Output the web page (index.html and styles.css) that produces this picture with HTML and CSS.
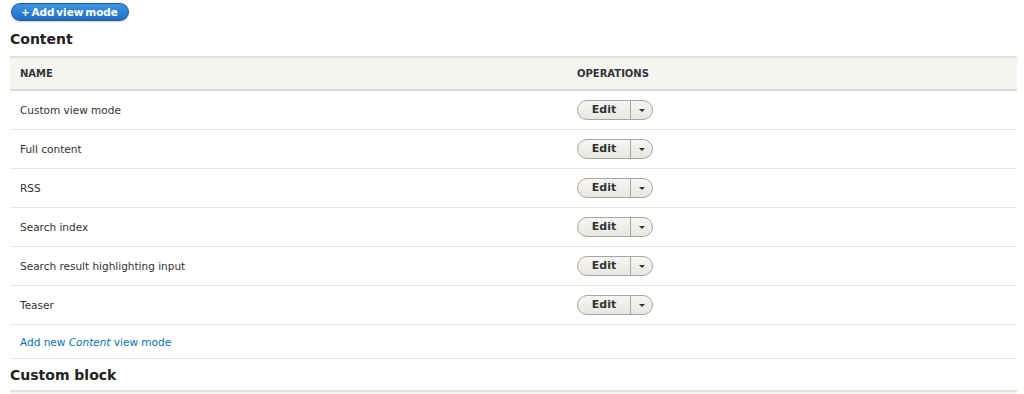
FILE: index.html
```html
<!DOCTYPE html>
<html lang="en">
<head>
    <meta charset="UTF-8">
    <title>View modes</title>
    <link rel="stylesheet" href="styles.css">
</head>
<body>
    <a class="action-button" href="#">+ Add view mode</a>

    <h2 class="section-title">Content</h2>
    <table class="modes">
        <thead>
            <tr><th class="col-name">Name</th><th>Operations</th></tr>
        </thead>
        <tbody>
            <tr><td>Custom view mode</td><td><div class="dropbutton"><span class="db-main">Edit</span><span class="db-toggle"></span></div></td></tr>
            <tr><td>Full content</td><td><div class="dropbutton"><span class="db-main">Edit</span><span class="db-toggle"></span></div></td></tr>
            <tr><td>RSS</td><td><div class="dropbutton"><span class="db-main">Edit</span><span class="db-toggle"></span></div></td></tr>
            <tr><td>Search index</td><td><div class="dropbutton"><span class="db-main">Edit</span><span class="db-toggle"></span></div></td></tr>
            <tr><td>Search result highlighting input</td><td><div class="dropbutton"><span class="db-main">Edit</span><span class="db-toggle"></span></div></td></tr>
            <tr><td>Teaser</td><td><div class="dropbutton"><span class="db-main">Edit</span><span class="db-toggle"></span></div></td></tr>
            <tr class="add-row"><td colspan="2"><a href="#">Add new <em>Content</em> view mode</a></td></tr>
        </tbody>
    </table>

    <h2 class="section-title next-section">Custom block</h2>
    <div class="table-start"></div>
</body>
</html>
```

FILE: styles.css
```css
* { box-sizing: border-box; }
body {
    margin: 0;
    padding: 3px 7px 0 10px;
    font-family: "DejaVu Sans", "Liberation Sans", sans-serif;
    font-size: 12px;
    color: #333;
    background: #fff;
}
.action-button {
    display: inline-block;
    margin-left: 1px;
    height: 18px;
    line-height: 16px;
    padding: 0 10px 0 9px;
    border-radius: 10px;
    border: 1px solid #1e5c90;
    background: linear-gradient(#3b95e4, #1e6fc4);
    color: #fff;
    font-weight: bold;
    font-size: 10.5px;
    word-spacing: -2px;
    text-decoration: none;
    box-shadow: 0 1px 2px rgba(0,0,0,0.2);
}
.section-title {
    margin: 9px 0 7px;
    font-size: 14px;
    font-weight: bold;
    color: #222;
    line-height: 19px;
}
.section-title.next-section { margin: 7px 0 5px; }
.modes {
    width: 100%;
    border-collapse: collapse;
    border-top: 2px solid #e2e1dc;
}
.modes th {
    background: #f5f5f2;
    text-align: left;
    text-transform: uppercase;
    font-size: 10px;
    font-weight: bold;
    color: #333;
    height: 33px;
    padding: 0 10px;
    border-bottom: 2px solid #dcdbd6;
}
.modes .col-name { width: 557px; }
.modes td {
    height: 39px;
    padding: 1px 10px 0;
    border-bottom: 1px solid #e8e7e3;
    font-size: 10.5px;
}
.modes .add-row td { height: 34px; }
.modes a {
    color: #0074bd;
    text-decoration: none;
}
.dropbutton {
    display: inline-flex;
    height: 20px;
    border: 1px solid #a6a6a6;
    border-radius: 10px;
    background: linear-gradient(#f6f6f3, #e8e7e1);
    vertical-align: middle;
}
.db-main {
    width: 52px;
    text-align: center;
    line-height: 18px;
    font-weight: bold;
    font-size: 11px;
    color: #333;
}
.db-toggle {
    position: relative;
    width: 22px;
    border-left: 1px solid #a6a6a6;
}
.db-toggle::after {
    content: "";
    position: absolute;
    left: 8px;
    top: 8px;
    border-left: 3px solid transparent;
    border-right: 3px solid transparent;
    border-top: 3px solid #333;
}
.table-start {
    height: 8px;
    border-top: 2px solid #e2e1dc;
    background: #f5f5f2;
}
```
